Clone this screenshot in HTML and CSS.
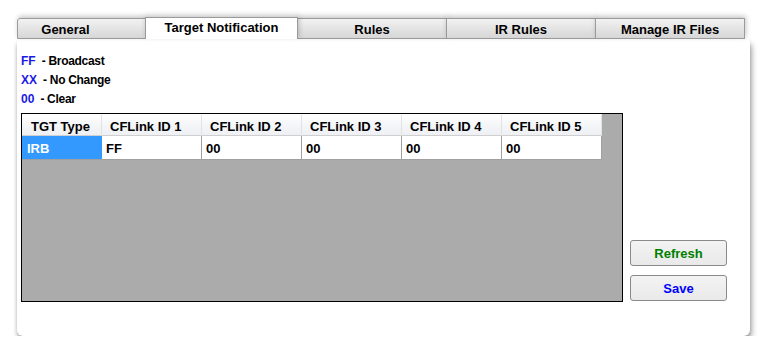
FILE: index.html
```html
<!DOCTYPE html>
<html>
<head>
<meta charset="utf-8">
<link rel="stylesheet" href="styles.css">
</head>
<body>
<div class="window">
  <div class="tabs">
    <div class="tab tab-first">General</div>
    <div class="tab tab-active">Target Notification</div>
    <div class="tab">Rules</div>
    <div class="tab">IR Rules</div>
    <div class="tab">Manage IR Files</div>
  </div>
  <div class="panel">
    <div class="legend">
      <div class="legend-line"><span class="code">FF</span> - Broadcast</div>
      <div class="legend-line"><span class="code">XX</span> - No Change</div>
      <div class="legend-line"><span class="code">00</span> - Clear</div>
    </div>
    <div class="main">
      <div class="grid">
        <div class="row head">
          <div class="cell c0">TGT Type</div>
          <div class="cell">CFLink ID 1</div>
          <div class="cell">CFLink ID 2</div>
          <div class="cell">CFLink ID 3</div>
          <div class="cell">CFLink ID 4</div>
          <div class="cell">CFLink ID 5</div>
        </div>
        <div class="row data">
          <div class="cell c0 sel">IRB</div>
          <div class="cell">FF</div>
          <div class="cell">00</div>
          <div class="cell">00</div>
          <div class="cell">00</div>
          <div class="cell">00</div>
        </div>
      </div>
      <div class="buttons">
        <button class="btn btn-refresh">Refresh</button>
        <button class="btn btn-save">Save</button>
      </div>
    </div>
  </div>
</div>
</body>
</html>
```

FILE: styles.css
```css
* { box-sizing: border-box; }
html, body {
  margin: 0;
  padding: 0;
  background: #ffffff;
}
body {
  font-family: "Liberation Sans", Arial, sans-serif;
  font-size: 13px;
  font-weight: bold;
  color: #000;
}
.window {
  margin: 17px 0 0 17px;
  width: 733px;
}
.tabs {
  display: flex;
  align-items: flex-end;
  height: 22px;
}
.tab {
  width: 150px;
  height: 21px;
  margin-left: -1px;
  border: 1px solid #9a9a9a;
  background: linear-gradient(#f2f2f2, #e4e4e4 50%, #d6d6d6);
  text-align: center;
  line-height: 19px;
  padding-top: 1px;
  font-size: 13px;
  box-shadow: 1px -2px 5px rgba(0,0,0,0.22);
}
.tab-first {
  margin-left: 0;
  width: 129px;
  padding-right: 32px;
  border-top-left-radius: 3px;
}
.tab-active {
  width: 153px;
  height: 22px;
  background: #ffffff;
  border-bottom: none;
  padding-top: 0;
  line-height: 20px;
  position: relative;
  z-index: 1;
}
.panel {
  background: #ffffff;
  height: 297px;
  padding: 13px 0 0 4px;
  border-radius: 0 4px 6px 6px;
  box-shadow: 2px 4px 6px -1px rgba(0,0,0,0.45), -1px 3px 5px -2px rgba(0,0,0,0.3);
}
.legend-line {
  height: 19px;
  line-height: 19px;
  font-size: 12px;
  letter-spacing: -0.3px;
}
.code {
  color: #1a1ae6;
  margin-right: 3px;
  letter-spacing: 0;
}
.main {
  display: flex;
  align-items: flex-end;
  margin-top: 4px;
}
.grid {
  width: 602px;
  height: 189px;
  border: 1px solid #000;
  background: #ababab;
}
.row {
  display: flex;
}
.cell {
  width: 100px;
  flex: none;
}
.c0 { width: 80px; }
.head .cell {
  height: 22px;
  padding: 3px 0 0 8px;
  line-height: 18px;
  background: linear-gradient(#ffffff, #f6f7f9 40%, #eef0f3);
  border-right: 1px solid #e3e3e3;
  border-bottom: 1px solid #cfcfcf;
  border-top: 1px solid #ffffff;
}
.head .c0 { padding-left: 9px; }
.data .cell {
  height: 24px;
  padding: 3px 0 0 4px;
  line-height: 20px;
  background: #ffffff;
  border-right: 1px solid #a0a0a0;
  border-bottom: 1px solid #a0a0a0;
}
.data .sel {
  background: #3399ff;
  color: #ffffff;
  border-right: none;
  border-bottom: 1px solid #a0a0a0;
  padding-left: 5px;
}
.buttons {
  display: flex;
  flex-direction: column;
  gap: 9px;
  margin-left: 7px;
  margin-bottom: 1px;
}
.btn {
  width: 97px;
  height: 26px;
  border: 1px solid #8a8a8a;
  border-radius: 3px;
  background: linear-gradient(#f3f3f3, #e9e9e9);
  font-family: "Liberation Sans", Arial, sans-serif;
  font-size: 13px;
  font-weight: bold;
  padding: 0;
}
.btn-refresh { color: #008000; }
.btn-save { color: #0000ff; }
```
